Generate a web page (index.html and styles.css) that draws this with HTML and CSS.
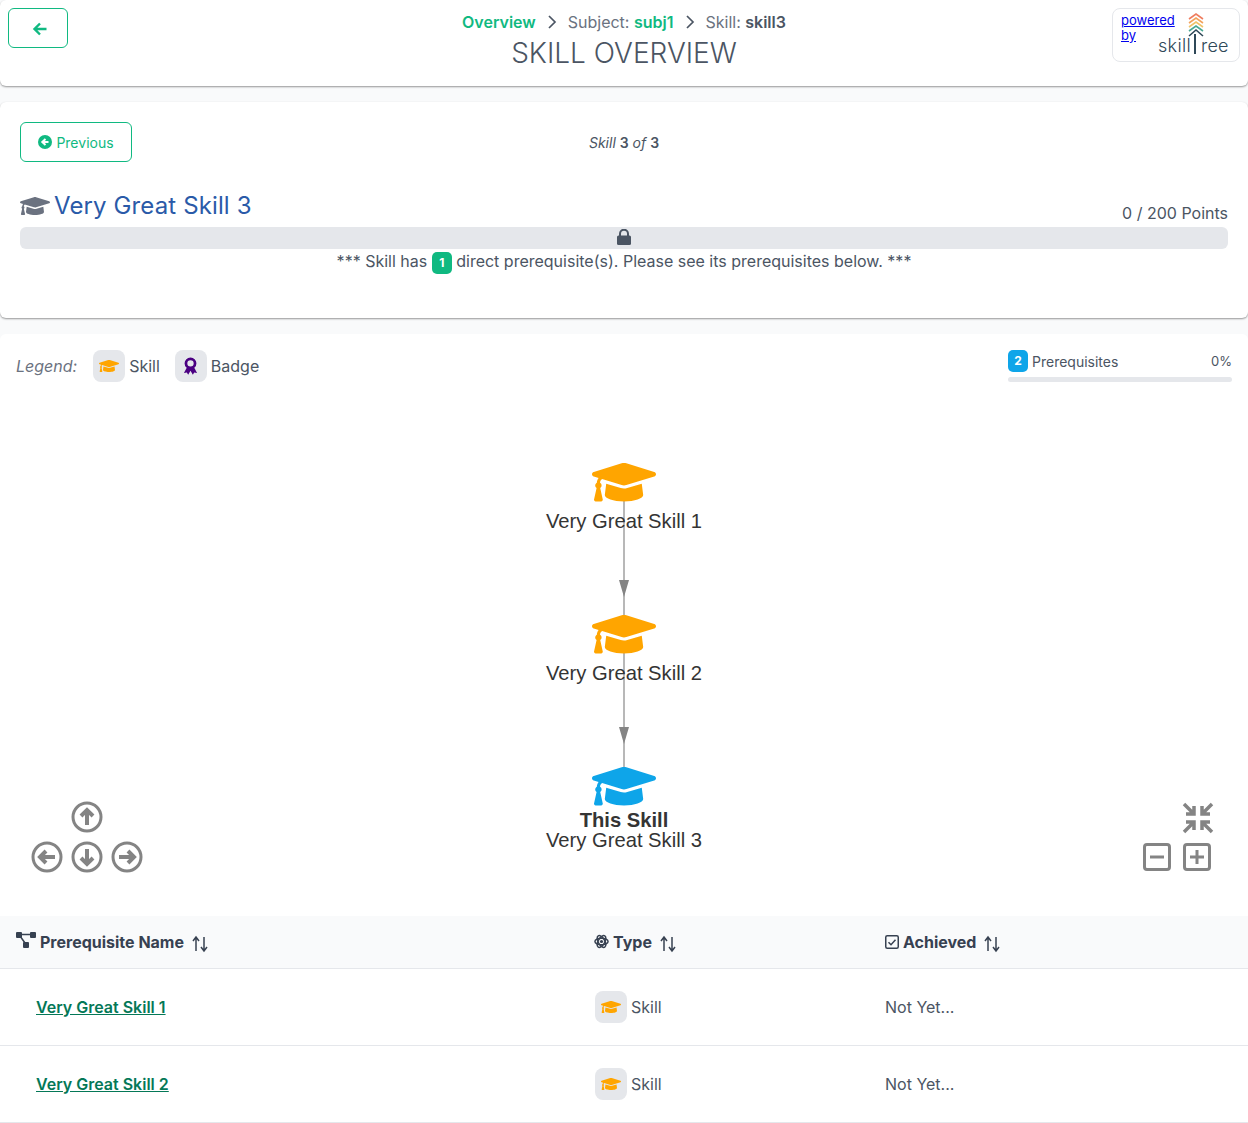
FILE: index.html
```html
<!DOCTYPE html>
<html lang="en">
<head>
<meta charset="utf-8">
<title>Skill Overview</title>
<link rel="stylesheet" href="styles.css">
</head>
<body>
<svg class="defs" width="0" height="0" aria-hidden="true">
  <symbol id="cap" viewBox="0 0 640 512"><path d="M622.34 153.2L343.4 67.5c-15.2-4.67-31.6-4.67-46.79 0L17.66 153.2c-23.54 7.23-23.54 38.36 0 45.59l48.63 14.94c-10.67 13.19-17.23 29.28-17.88 46.9C38.78 266.15 32 276.11 32 288c0 10.78 5.68 19.85 13.86 25.65L20.33 428.53C18.11 438.52 25.71 448 35.94 448h56.11c10.24 0 17.84-9.48 15.62-19.47L82.14 313.65C90.32 307.85 96 298.78 96 288c0-11.57-6.47-21.25-15.66-26.87.76-15.02 8.44-28.3 20.69-36.72L296.6 284.5c9.06 2.78 26.44 6.25 46.79 0l278.95-85.7c23.55-7.24 23.55-38.36 0-45.6zM352.79 315.09c-28.53 8.76-52.84 3.92-65.59 0l-145.02-44.55L128 384c0 35.35 85.96 64 192 64s192-28.65 192-64l-14.18-113.47-145.03 44.56z"/></symbol>
  <symbol id="sort" viewBox="0 0 18 18"><path d="M5 16V2.500M2 6l3-4 3 4" fill="none" stroke="currentColor" stroke-width="1.500"/><path d="M13 2v13.500M10 12l3 4 3-4" fill="none" stroke="currentColor" stroke-width="1.500"/></symbol>
</svg>

<header class="card top">
  <a class="back" href="#"><svg width="16" height="16" viewBox="0 0 16 16"><path d="M14.500 8H3M8 2.500L2.500 8 8 13.500" fill="none" stroke="currentColor" stroke-width="2.400"/></svg></a>
  <div class="heading">
    <nav class="crumbs">
      <a class="crumb-link" href="#">Overview</a>
      <svg class="chev" width="10" height="14" viewBox="0 0 10 14"><path d="M2 1l6 6-6 6" fill="none" stroke="currentColor" stroke-width="1.700"/></svg>
      <span>Subject: <b class="crumb-green">subj1</b></span>
      <svg class="chev" width="10" height="14" viewBox="0 0 10 14"><path d="M2 1l6 6-6 6" fill="none" stroke="currentColor" stroke-width="1.700"/></svg>
      <span>Skill: <b class="crumb-dark">skill3</b></span>
    </nav>
    <h1>SKILL OVERVIEW</h1>
  </div>
  <div class="powered">
    <div class="powered-text"><a href="#">powered by</a></div>
    <div class="logo">
      <svg class="chevrons" width="16" height="26" viewBox="0 0 16 26" fill="none" stroke-width="1.600">
        <path d="M1 7l7-5 7 5" stroke="#ef7d5f"/><path d="M1 11l7-5 7 5" stroke="#f3a35c"/><path d="M1 15l7-5 7 5" stroke="#f0c36a"/><path d="M1 19l7-5 7 5" stroke="#4aa893"/><path d="M1 24l7-6 7 6" stroke="#2f4858"/>
      </svg>
      <span class="logotext">skill<i class="stem"></i>ree</span>
    </div>
  </div>
</header>

<section class="card skill">
  <div class="pager">
    <a class="prev" href="#">
      <svg width="14" height="14" viewBox="0 0 14 14"><circle cx="7" cy="7" r="7" fill="currentColor"/><path d="M10.500 7H5M7.500 4L4.300 7l3.200 3" fill="none" stroke="#fff" stroke-width="2"/></svg>
      Previous
    </a>
    <div class="count">Skill <b>3</b> of <b>3</b></div>
    <div class="pager-end"></div>
  </div>
  <div class="title-row">
    <h2><svg class="title-cap" width="30" height="24"><use href="#cap"/></svg>Very Great Skill 3</h2>
    <div class="points">0 / 200 Points</div>
  </div>
  <div class="lockbar">
    <svg width="14" height="16" viewBox="0 0 14 16"><path d="M3 7V4.700a4 4 0 0 1 8 0V7" fill="none" stroke="currentColor" stroke-width="2"/><rect x="0" y="6.500" width="14" height="9.500" rx="1.500" fill="currentColor"/></svg>
  </div>
  <p class="notice">*** Skill has <span class="tag">1</span> direct prerequisite(s). Please see its prerequisites below. ***</p>
</section>

<section class="card deps">
  <div class="legend-row">
    <div class="legend">
      <em>Legend:</em>
      <span class="legend-item"><span class="chip"><svg class="orange" width="20" height="16"><use href="#cap"/></svg></span>Skill</span>
      <span class="legend-item"><span class="chip"><svg class="purple" width="15" height="18" viewBox="0 0 14 17"><circle cx="7" cy="6" r="4.300" fill="none" stroke="currentColor" stroke-width="2.600"/><path d="M3.300 10.500L0.800 15l2.700-.300 1.300 2 2.200-3.700 2.200 3.700 1.300-2 2.700.3-2.500-4.500z" fill="currentColor"/></svg></span>Badge</span>
    </div>
    <div class="progress">
      <div class="progress-top">
        <span class="prog-label"><span class="tag blue">2</span>Prerequisites</span>
        <span class="prog-pct">0%</span>
      </div>
      <div class="progress-bar"></div>
    </div>
  </div>

  <div class="graph">
    <svg class="graph-svg" width="1248" height="534" viewBox="0 382 1248 534">
      <g class="edge"><path d="M624 500V615M624 652V767"/></g>
      <g class="head"><path d="M619 580h10l-5 17zM619 727h10l-5 17z"/></g>
      <use class="node-o" href="#cap" x="592" y="456.600" width="64" height="51.200"/>
      <use class="node-o" href="#cap" x="592" y="608.600" width="64" height="51.200"/>
      <use class="node-b" href="#cap" x="592" y="760.600" width="64" height="51.200"/>
      <text class="nlabel" x="624" y="528">Very Great Skill 1</text>
      <text class="nlabel" x="624" y="680">Very Great Skill 2</text>
      <text class="nlabel strong" x="624" y="827">This Skill</text>
      <text class="nlabel" x="624" y="847">Very Great Skill 3</text>

      <g class="ctrl">
        <circle cx="87" cy="817" r="14"/><path class="arr" d="M87 825V811M81 816l6-6 6 6"/>
        <circle cx="47" cy="857" r="14"/><path class="arr" d="M55 857H41M46 851l-6 6 6 6"/>
        <circle cx="87" cy="857" r="14"/><path class="arr" d="M87 849v14M81 858l6 6 6-6"/>
        <circle cx="127" cy="857" r="14"/><path class="arr" d="M119 857h14M128 851l6 6-6 6"/>
        <rect x="1144.500" y="844.500" width="25" height="25" rx="2.500"/><path class="thin" d="M1150 857h14"/>
        <rect x="1184.500" y="844.500" width="25" height="25" rx="2.500"/><path class="thin" d="M1190 857h14M1197 850v14"/>
        <path class="arr exp" d="M1184 804l9 9M1194 806v8h-8M1212 804l-9 9M1202 806v8h8M1184 832l9-9M1194 830v-8h-8M1212 832l-9-9M1202 830v-8h8"/>
      </g>
    </svg>
  </div>

  <table class="table">
    <thead>
      <tr>
        <th class="c1"><svg class="hicon net" width="20" height="16" viewBox="0 0 20 16"><rect width="6" height="6" x="0" y="0" rx="1"/><rect width="6" height="6" x="14" y="0" rx="1"/><rect width="6" height="6" x="7" y="10" rx="1"/><path d="M5 2.500h10M4 4l5 7" stroke="currentColor" stroke-width="1.500" fill="none"/></svg>Prerequisite Name<svg class="sort" width="18" height="18"><use href="#sort"/></svg></th>
        <th class="c2"><svg class="hicon" width="15" height="15" viewBox="0 0 16 16"><g fill="none" stroke="currentColor" stroke-width="1.600"><ellipse cx="8" cy="8" rx="7" ry="3.500"/><ellipse cx="8" cy="8" rx="7" ry="3.500" transform="rotate(60 8 8)"/><ellipse cx="8" cy="8" rx="7" ry="3.500" transform="rotate(120 8 8)"/></g><circle cx="8" cy="8" r="1.700"/></svg>Type<svg class="sort" width="18" height="18"><use href="#sort"/></svg></th>
        <th class="c3"><svg class="hicon" width="14" height="14" viewBox="0 0 14 14"><rect x=".75" y=".75" width="12.500" height="12.500" rx="1.500" fill="none" stroke="currentColor" stroke-width="1.500"/><path d="M3.500 7.200l2.500 2.500 4.500-5" fill="none" stroke="currentColor" stroke-width="1.500"/></svg>Achieved<svg class="sort" width="18" height="18"><use href="#sort"/></svg></th>
      </tr>
    </thead>
    <tbody>
      <tr>
        <td class="c1"><a class="skill-link" href="#">Very Great Skill 1</a></td>
        <td class="c2"><span class="legend-item"><span class="chip"><svg class="orange" width="20" height="16"><use href="#cap"/></svg></span>Skill</span></td>
        <td class="c3">Not Yet...</td>
      </tr>
      <tr>
        <td class="c1"><a class="skill-link" href="#">Very Great Skill 2</a></td>
        <td class="c2"><span class="legend-item"><span class="chip"><svg class="orange" width="20" height="16"><use href="#cap"/></svg></span>Skill</span></td>
        <td class="c3">Not Yet...</td>
      </tr>
    </tbody>
  </table>
</section>
</body>
</html>
```
FILE: styles.css
```css
* { box-sizing: border-box; }
html, body { margin: 0; padding: 0; }
body {
  background: #f9fafb;
  color: #4b5563;
  font-family: Inter, "Noto Sans", sans-serif;
  font-size: 16px;
  overflow: hidden;
  height: 1123px;
}
.defs { position: absolute; }
.card {
  background: #fff;
  border-radius: 6px;
  box-shadow: 0 1px 2px rgba(0, 0, 0, .4);
  margin-bottom: 16px;
}
.top {
  height: 86px;
  padding: 8px;
  display: grid;
  grid-template-columns: 128px 1fr 128px;
  margin-bottom: 16px;
}
.back {
  width: 60px;
  height: 40px;
  border: 1px solid #10b981;
  border-radius: 6px;
  color: #10b981;
  display: flex;
  align-items: center;
  justify-content: center;
  padding: 1px 0 0 4px;
}
.heading { text-align: center; }
.crumbs {
  display: flex;
  justify-content: center;
  align-items: center;
  gap: 10px;
  height: 28px;
  font-size: 16px;
  color: #6b7280;
  margin-top: 0;
}
.crumb-link { color: #10b981; font-weight: 600; text-decoration: none; }
.crumb-green { color: #10b981; font-weight: 600; }
.crumb-dark { color: #4b5563; font-weight: 600; }
.chev { color: #4b5563; margin: 0 1px; }
h1 {
  margin: 0;
  font-size: 28px;
  line-height: 34px;
  font-weight: 300;
  color: #4b5563;
}
.powered {
  height: 54px;
  border: 1px solid #e5e7eb;
  border-radius: 8px;
  padding: 4px 8px;
  position: relative;
  font-size: 13px;
  line-height: 15px;
}
.powered-text { width: 56px; }
.powered a { color: #0000ee; }
.logo { position: absolute; right: 11px; top: 5px; width: 70px; height: 42px; }
.chevrons { position: absolute; left: 30px; top: -2px; }
.logotext {
  position: absolute;
  left: 0;
  bottom: -1px;
  font-size: 18px;
  line-height: 22px;
  font-weight: 300;
  color: #2f4858;
  letter-spacing: .3px;
  white-space: nowrap;
}
.stem {
  display: inline-block;
  width: 2px;
  height: 20px;
  background: #2f4858;
  margin: 0 5px 0 3px;
  vertical-align: -2px;
}

.skill { height: 216px; padding: 20px; }
.pager { display: grid; grid-template-columns: 1fr auto 1fr; align-items: center; }
.prev {
  width: 112px;
  height: 40px;
  border: 1px solid #10b981;
  border-radius: 6px;
  color: #10b981;
  font-size: 14px;
  text-decoration: none;
  display: flex;
  align-items: center;
  justify-content: center;
  gap: 4px;
}
.count { font-size: 14px; font-style: italic; color: #4b5563; }
.count b { font-style: normal; font-weight: 600; }
.title-row {
  display: flex;
  justify-content: space-between;
  align-items: flex-end;
  margin-top: 26px;
  height: 39px;
}
h2 {
  margin: 0 0 4px;
  font-size: 24px;
  line-height: 34px;
  font-weight: 400;
  letter-spacing: .12px;
  color: #2a5aa8;
  display: flex;
  align-items: center;
  gap: 4px;
  height: 34px;
}
.title-cap { fill: #6b7280; }
.points { font-size: 16px; line-height: 24px; margin-bottom: 2px; }
.lockbar {
  height: 22px;
  background: #e5e7eb;
  border-radius: 6px;
  display: flex;
  justify-content: center;
  align-items: center;
  color: #4b5563;
  padding-bottom: 2px;
}
.notice { margin: 0; text-align: center; font-size: 16px; line-height: 24px; }
.tag {
  display: inline-block;
  min-width: 20px;
  height: 22px;
  line-height: 22px;
  padding: 0 3px;
  background: #10b981;
  color: #fff;
  border-radius: 5px;
  font-size: 12px;
  font-weight: 700;
  text-align: center;
  vertical-align: 0;
}
.tag.blue { background: #0ea5e9; }

.deps { margin-bottom: 0; height: 800px; overflow: hidden; box-shadow: none; }
.legend-row {
  display: flex;
  justify-content: space-between;
  padding: 16px 16px 0;
  height: 48px;
}
.legend { display: flex; align-items: center; height: 32px; }
.legend em { color: #6b7280; margin-right: 16px; }
.legend-item { display: inline-flex; align-items: center; gap: 4px; margin-right: 15px; }
.chip {
  width: 32px;
  height: 32px;
  background: #e5e7eb;
  border-radius: 8px;
  display: inline-flex;
  align-items: center;
  justify-content: center;
}
.orange { fill: #ffa500; }
.purple { color: #4b0082; }
.progress { width: 224px; }
.progress-top { display: flex; justify-content: space-between; align-items: center; height: 22px; margin-bottom: 5px; }
.prog-label { font-size: 14px; display: inline-flex; align-items: center; gap: 4px; }
.prog-pct { font-size: 13px; }
.progress-bar { height: 5px; background: #e5e7eb; border-radius: 3px; }

.graph { height: 534px; }
.graph-svg { display: block; }
.edge path { stroke: #b8b8b8; stroke-width: 2; fill: none; }
.head path { fill: #848484; }
.node-o { fill: #ffa500; }
.node-b { fill: #0ea5e9; }
.nlabel {
  font-family: "Liberation Sans", Arial, sans-serif;
  font-size: 20.2px;
  fill: #343434;
  text-anchor: middle;
}
.nlabel.strong { font-weight: 700; font-size: 20.2px; }
.ctrl circle, .ctrl rect { fill: none; stroke: #848484; stroke-width: 3; }
.ctrl .arr { fill: none; stroke: #848484; stroke-width: 4; }
.ctrl .exp { stroke-width: 3.5; }
.ctrl .thin { fill: none; stroke: #848484; stroke-width: 3; }

.table { width: 100%; border-collapse: collapse; table-layout: fixed; margin-top: 0; }
.c1 { width: 578px; }
.c2 { width: 291px; }
th {
  height: 52px;
  background: #f9fafb;
  border-bottom: 1px solid #e5e7eb;
  color: #374151;
  font-size: 16px;
  font-weight: 700;
  text-align: left;
  padding: 2px 16px 0;
  white-space: nowrap;
}
td {
  height: 77px;
  border-bottom: 1px solid #e5e7eb;
  padding: 0 16px;
}
td.c1 { padding-left: 36px; }
td.c2 { padding-left: 17px; }
.hicon { fill: currentColor; color: #374151; margin-right: 4px; vertical-align: -1px; }
.net { vertical-align: 0; }
.sort { color: #374151; margin-left: 7px; vertical-align: -5px; }
.skill-link { color: #047857; font-weight: 600; text-decoration: underline; }
```
